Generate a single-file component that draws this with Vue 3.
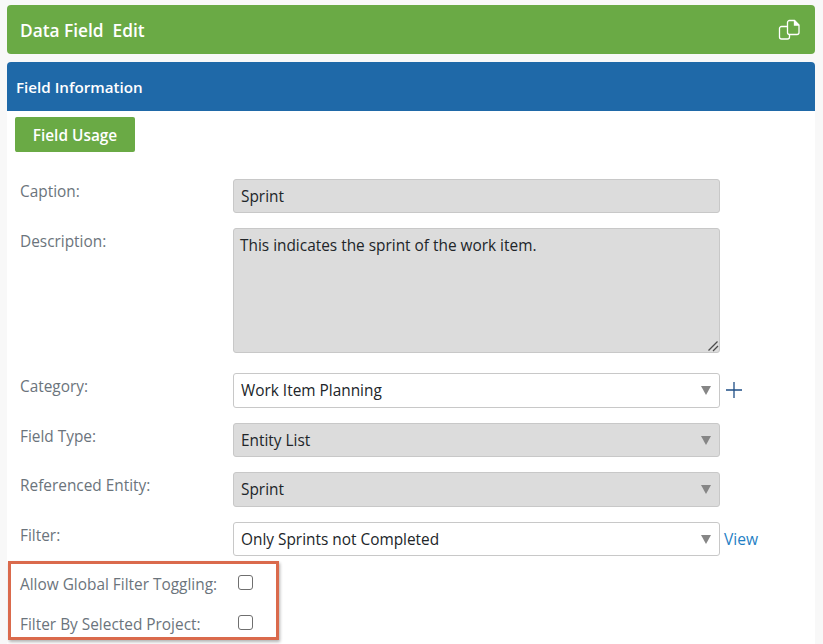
<script setup>
const rows = [
  { label: 'Category:', value: 'Work Item Planning', disabled: false, after: 'plus' },
  { label: 'Field Type:', value: 'Entity List', disabled: true },
  { label: 'Referenced Entity:', value: 'Sprint', disabled: true },
  { label: 'Filter:', value: 'Only Sprints not Completed', disabled: false, after: 'view' },
]
const checks = ['Allow Global Filter Toggling:', 'Filter By Selected Project:']
</script>

<template>
  <div class="page">
    <header class="title-bar">
      <span class="title">Data Field&nbsp; Edit</span>
      <svg class="copy" width="22" height="22" viewBox="0 0 22 22" fill="none" stroke="#fff" stroke-width="1.3">
        <path d="M9 7.500H3.500a2 2 0 0 0-2 2V18a2 2 0 0 0 2 2h6a2 2 0 0 0 2-2v-2" />
        <path d="M9.500 3.500a2 2 0 0 1 2-2h5l4.500 4.500V13.500a2 2 0 0 1-2 2h-7.500a2 2 0 0 1-2-2z" />
        <path d="M16.500 1.500V6H21" fill="#fff" />
      </svg>
    </header>
    <section class="panel-head">Field Information</section>
    <main class="panel">
      <button class="usage" type="button">Field Usage</button>
      <div class="row caption-row">
        <label class="label">Caption:</label>
        <div class="control off">Sprint</div>
      </div>
      <div class="row desc-row">
        <label class="label">Description:</label>
        <div class="area-wrap">
          <textarea class="control off area" readonly>This indicates the sprint of the work item.</textarea>
          <svg class="grip" width="12" height="12" viewBox="0 0 12 12">
            <path d="M1.500 10.500 10.500 1.500M6 11l5-5" stroke="#4a4a4a" stroke-width="1.300" fill="none" />
          </svg>
        </div>
      </div>
      <div v-for="r in rows" :key="r.label" class="row select-row">
        <label class="label">{{ r.label }}</label>
        <div class="control select" :class="{ off: r.disabled }">
          {{ r.value }}
          <span class="arrow"></span>
        </div>
        <svg v-if="r.after === 'plus'" class="plus" width="18" height="18" viewBox="0 0 18 18">
          <path d="M1 9h16M9 1v16" stroke="#1f4f86" stroke-width="1.300" fill="none" />
        </svg>
        <a v-if="r.after === 'view'" class="view">View</a>
      </div>
      <div class="callout">
        <div v-for="c in checks" :key="c" class="check-row">
          <label class="check-label">{{ c }}</label>
          <span class="box"></span>
        </div>
      </div>
    </main>
  </div>
</template>

<style>
html, body { margin: 0; background: #f8f8f8; }
</style>

<style scoped>
.page {
  width: 808px;
  height: 644px;
  margin-left: 7px;
  padding-top: 5px;
  box-sizing: border-box;
  overflow: hidden;
  font-family: "Open Sans", "Noto Sans", sans-serif;
  font-size: 15.4px;
  color: #212529;
}
.title-bar {
  height: 49px;
  background: #6aaa45;
  border-radius: 4px;
  display: flex;
  align-items: center;
  justify-content: space-between;
  padding: 0 15px 0 13px;
  color: #fff;
}
.title { font-size: 17.3px; font-weight: 600; padding-top: 1px; }
.panel-head {
  margin-top: 8px;
  height: 49px;
  background: #1f69a8;
  border-radius: 4px 4px 0 0;
  color: #fff;
  font-size: 15.2px;
  font-weight: 600;
  line-height: 51px;
  padding-left: 9px;
}
.panel {
  background: #fff;
  height: 533px;
  padding: 6px 0 0;
  box-sizing: border-box;
}
.usage {
  display: block;
  margin-left: 8px;
  width: 120px;
  height: 35px;
  border: 0;
  border-radius: 2px;
  background: #6aaa45;
  color: #fff;
  font: 600 15.4px "Open Sans", sans-serif;
  padding: 2px 0 0;
}
.row {
  display: flex;
  align-items: flex-start;
  padding-left: 13px;
}
.label, .check-label {
  color: #6b747c;
  font-size: 15.4px;
}
.label {
  width: 213px;
  flex: none;
  line-height: 20px;
  padding-top: 3px;
}
.caption-row { margin-top: 27px; }
.desc-row { margin-top: 15px; }
.desc-row .label { padding-top: 4px; }
.select-row { margin-top: 15px; height: 34.5px; position: relative; }
.select-row .label { padding-top: 4px; }
.desc-row + .select-row { margin-top: 20px; }
.control {
  box-sizing: border-box;
  width: 487px;
  height: 34px;
  border: 1px solid #c8c8c8;
  border-radius: 3px;
  background: #fff;
  padding: 0 7px;
  color: #212529;
  font: inherit;
  line-height: 33px;
}
.off { background: #dcdcdc; }
.area-wrap { position: relative; width: 487px; height: 125px; }
.area {
  display: block;
  height: 125px;
  padding: 7px 6px;
  line-height: 20px;
  resize: none;
  outline: none;
  margin: 0;
}
.grip {
  position: absolute;
  right: 1px;
  bottom: 1px;
  pointer-events: none;
}
.select { position: relative; line-height: 34px; height: 34.5px; }
.arrow {
  position: absolute;
  right: 8px;
  top: 12px;
  width: 0;
  height: 0;
  border-left: 5px solid transparent;
  border-right: 5px solid transparent;
  border-top: 9px solid #868686;
}
.plus { margin: 8px 0 0 5px; }
.view { color: #1f7fc4; margin: 6px 0 0 4px; line-height: 22px; font-size: 15.6px; }
.callout {
  box-sizing: border-box;
  margin: 5px 0 0 1px;
  width: 271px;
  height: 79px;
  border: 3px solid #da6a4c;
  box-shadow: 1px 2px 3px rgba(0, 0, 0, 0.3);
  padding: 0 0 0 9px;
}
.check-row {
  display: flex;
  align-items: center;
  justify-content: space-between;
  height: 40px;
  padding-right: 23px;
}
.box {
  width: 13px;
  height: 13px;
  margin-bottom: 4px;
  border: 1px solid #6f6f6f;
  border-radius: 3px;
  background: #fff;
}
</style>
